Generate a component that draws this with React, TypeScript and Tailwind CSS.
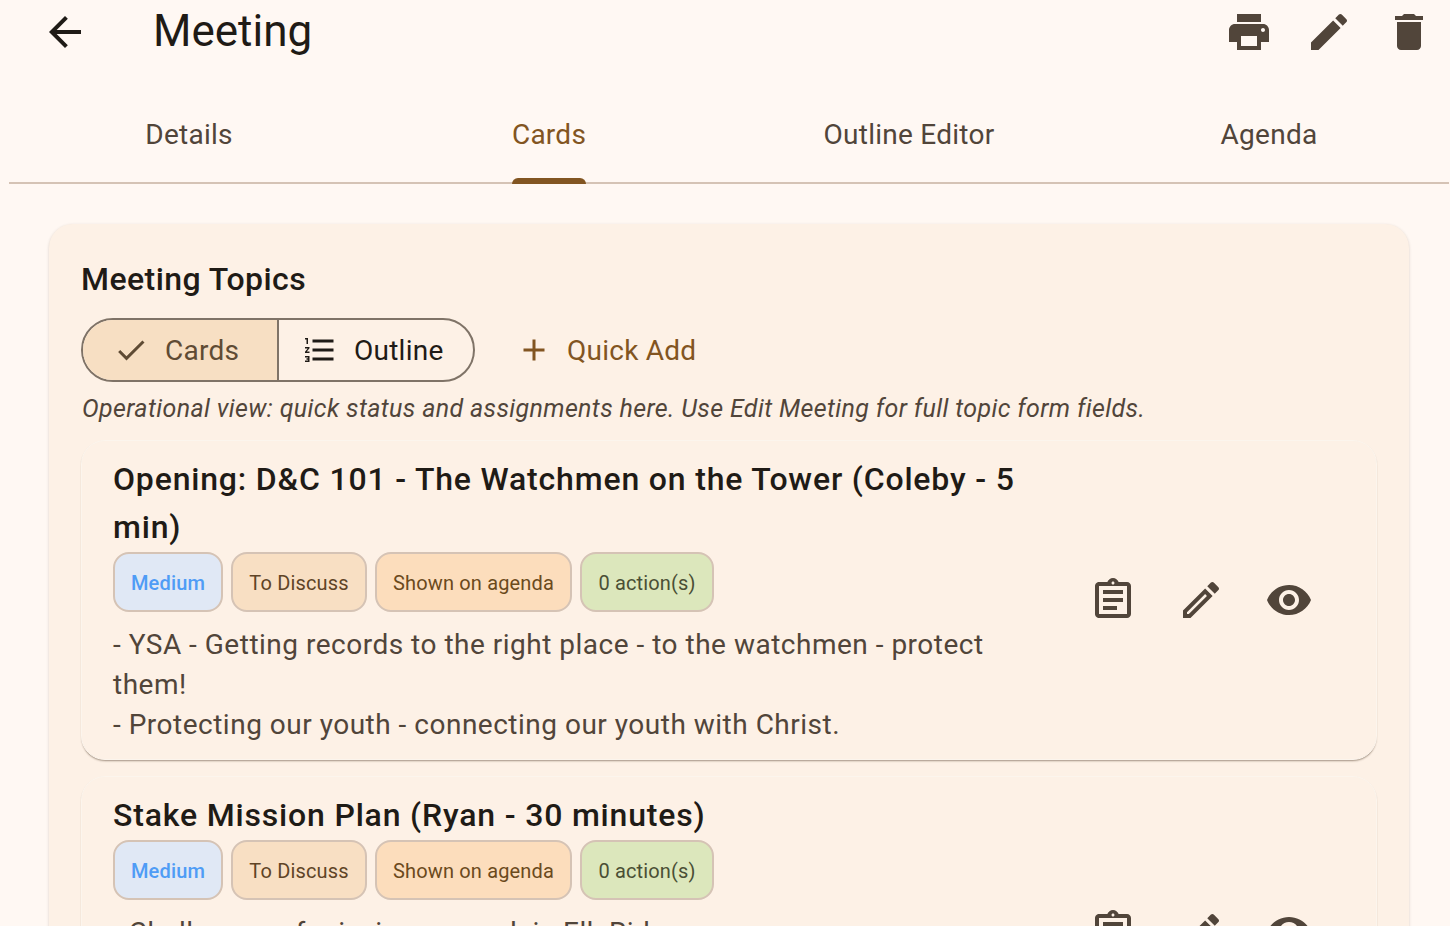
const paths = {
  back: 'M20 11H7.83l5.59-5.59L12 4l-8 8 8 8 1.41-1.41L7.83 13H20v-2z',
  print: 'M19 8H5c-1.66 0-3 1.34-3 3v6h4v4h12v-4h4v-6c0-1.66-1.34-3-3-3zm-3 11H8v-5h8v5zm3-7c-.55 0-1-.45-1-1s.45-1 1-1 1 .45 1 1-.45 1-1 1zm-1-9H6v4h12V3z',
  edit: 'M3 17.25V21h3.75L17.81 9.94l-3.75-3.75L3 17.25zM20.71 7.04c.39-.39.39-1.02 0-1.41l-2.34-2.34c-.39-.39-1.02-.39-1.41 0l-1.83 1.83 3.75 3.75 1.83-1.83z',
  trash: 'M6 19c0 1.1.9 2 2 2h8c1.1 0 2-.9 2-2V7H6v12zM19 4h-3.5l-1-1h-5l-1 1H5v2h14V4z',
  check: 'M9 16.17L4.83 12l-1.42 1.41L9 19 21 7l-1.41-1.41z',
  list: 'M2 17h2v.5H3v1h1v.5H2v1h3v-4H2v1zm1-9h1V4H2v1h1v3zm-1 3h1.8L2 13.1v.9h3v-1H3.2L5 10.9V10H2v1zm5-6v2h14V5H7zm0 14h14v-2H7v2zm0-6h14v-2H7v2z',
  plus: 'M19 13h-6v6h-2v-6H5v-2h6V5h2v6h6v2z',
  assignment: 'M7 15h7v2H7zm0-4h10v2H7zm0-4h10v2H7zm12-4h-4.18C14.4 1.84 13.3 1 12 1c-1.3 0-2.4.84-2.82 2H5c-.14 0-.27.01-.4.04-.39.08-.74.28-1.01.55-.18.18-.33.4-.43.64-.1.23-.16.49-.16.77v14c0 .27.06.54.16.78s.25.45.43.64c.27.27.62.47 1.01.55.13.02.26.03.4.03h14c1.1 0 2-.9 2-2V5c0-1.1-.9-2-2-2zm-7-.25c.41 0 .75.34.75.75s-.34.75-.75.75-.75-.34-.75-.75.34-.75.75-.75zM19 19H5V5h14v14z',
  editOutline: 'M14.06 9.02l.92.92L5.92 19H5v-.92l9.06-9.06M17.66 3c-.25 0-.51.1-.7.29l-1.83 1.83 3.75 3.75 1.83-1.83c.39-.39.39-1.02 0-1.41l-2.34-2.34c-.2-.2-.45-.29-.71-.29zm-3.6 3.19L3 17.25V21h3.75L17.81 9.94l-3.75-3.75z',
  eye: 'M12 4.5C7 4.5 2.73 7.61 1 12c1.73 4.39 6 7.5 11 7.5s9.27-3.11 11-7.5c-1.73-4.39-6-7.5-11-7.5zM12 17c-2.76 0-5-2.24-5-5s2.24-5 5-5 5 2.24 5 5-2.24 5-5 5zm0-8c-1.66 0-3 1.34-3 3s1.34 3 3 3 3-1.34 3-3-1.34-3-3-3z',
};

function Icon({ d, className }: { d: string; className: string }) {
  return (
    <svg viewBox="0 0 24 24" fill="currentColor" className={className}>
      <path d={d} />
    </svg>
  );
}

function Chips() {
  return (
    <div className="mt-px flex gap-2 text-[20px] leading-[30px] tracking-[0.15px]">
      <span className="flex h-[60px] w-[110px] items-center justify-center rounded-2xl border-2 border-[#d5c3b5] bg-[#e0e8f5] pt-0.5 font-medium text-[#4f9cf5]">Medium</span>
      <span className="flex h-[60px] w-[136px] items-center justify-center rounded-2xl border-2 border-[#d5c3b5] bg-[#f8dfc3] pt-0.5 text-[#5f4426]">To Discuss</span>
      <span className="flex h-[60px] w-[197px] items-center justify-center rounded-2xl border-2 border-[#d5c3b5] bg-[#fcddbc] pt-0.5 text-[#6b4a1c]">Shown on agenda</span>
      <span className="flex h-[60px] w-[134px] items-center justify-center rounded-2xl border-2 border-[#d5c3b5] bg-[#dce7bc] pt-0.5 text-[#4a4f35]">0 action(s)</span>
    </div>
  );
}

function Actions() {
  return (
    <div className="flex gap-10 text-[#51453a]">
      <Icon d={paths.assignment} className="h-12 w-12" />
      <Icon d={paths.editOutline} className="h-12 w-12" />
      <Icon d={paths.eye} className="h-12 w-12" />
    </div>
  );
}

function TopicCard({ title, lines, className }: { title: string; lines: string[]; className: string }) {
  return (
    <div className={`flex rounded-[24px] border border-[#fcf5ed] bg-[#fdf1e6] pt-[14px] pr-[63px] pb-[15px] pl-[31px] shadow-[0_2px_2px_-1px_rgba(80,60,40,0.45),0_1px_2px_-1px_rgba(80,60,40,0.3)] ${className}`}>
      <div className="w-[920px]">
        <h3 className="text-[32px] leading-[48px] font-medium tracking-[0.82px] text-[#1f1b16]">{title}</h3>
        <Chips />
        <div className="mt-[13px] text-[28px] leading-[40px] tracking-[0.5px] text-[#51453a]">
          {lines.map((line) => (
            <p key={line}>{line}</p>
          ))}
        </div>
      </div>
      <div className="ml-auto self-center">
        <Actions />
      </div>
    </div>
  );
}

export default function App() {
  const tabs = ['Details', 'Cards', 'Outline Editor', 'Agenda'];

  return (
    <div className="h-[926px] overflow-hidden bg-[#fff8f3] font-['Roboto',sans-serif]">
      <header className="flex h-[64px] items-center pr-[17px] pl-[41px] text-[#51453a]">
        <Icon d={paths.back} className="h-12 w-12 text-[#1f1b16]" />
        <h1 className="mb-0.5 ml-[64px] text-[44px] leading-[60px] text-[#1f1b16]">Meeting</h1>
        <div className="ml-auto flex gap-8">
          <Icon d={paths.print} className="h-12 w-12" />
          <Icon d={paths.edit} className="h-12 w-12" />
          <Icon d={paths.trash} className="h-12 w-12" />
        </div>
      </header>

      <nav className="mt-5 mr-px ml-[9px] flex h-[100px] border-b-2 border-[#d5c3b5] text-[28px] tracking-[0.25px]">
        {tabs.map((tab) => (
          <div key={tab} className="flex flex-1 items-center justify-center">
            <span className={tab === 'Cards' ? 'relative flex h-full items-center pt-[3px] text-[#825521]' : 'pt-[3px] text-[#51453a]'}>
              {tab}
              {tab === 'Cards' && <span className="absolute right-0 bottom-[-2px] left-0 h-[6px] rounded-t-[6px] bg-[#825521]" />}
            </span>
          </div>
        ))}
      </nav>

      <main className="mt-[40px] mr-[41px] ml-[49px] h-[800px] rounded-[24px] bg-[#fdf1e6] px-8 pt-[31px] shadow-[0_1px_3px_rgba(80,60,40,0.22)]">
        <h2 className="text-[32px] leading-[48px] font-medium tracking-[0.43px] text-[#1f1b16]">Meeting Topics</h2>
        <div className="mt-[15px] flex items-center">
          <div className="flex h-16 w-[394px] overflow-hidden rounded-full border-2 border-[#7f7367] text-[28px] tracking-[0.25px]">
            <div className="flex w-[196px] items-center gap-4 border-r-2 border-[#7f7367] bg-[#f7dfc3] pl-[30px] text-[#5f4b34]">
              <Icon d={paths.check} className="h-9 w-9" />
              <span className="pt-0.5">Cards</span>
            </div>
            <div className="flex flex-1 items-center gap-4 pl-[23px] text-[#1f1b16]">
              <Icon d={paths.list} className="h-9 w-9" />
              <span className="pt-0.5">Outline</span>
            </div>
          </div>
          <div className="ml-[41px] flex items-center gap-[15px] text-[28px] tracking-[0.25px] text-[#825521]">
            <Icon d={paths.plus} className="h-9 w-9" />
            <span className="pt-0.5">Quick Add</span>
          </div>
        </div>
        <p className="mt-[9px] pl-px text-[25px] leading-[36px] tracking-[0.36px] text-[#51453a] italic">
          Operational view: quick status and assignments here. Use Edit Meeting for full topic form fields.
        </p>
        <div className="mt-[13px] flex flex-col gap-4">
          <TopicCard
            className="h-[320px]"
            title="Opening: D&C 101 - The Watchmen on the Tower (Coleby - 5 min)"
            lines={['- YSA - Getting records to the right place - to the watchmen - protect them!', '- Protecting our youth - connecting our youth with Christ.']}
          />
          <TopicCard
            className="h-[312px]"
            title="Stake Mission Plan (Ryan - 30 minutes)"
            lines={['- Challenges of missionary work in Elk Ridge']}
          />
        </div>
      </main>
    </div>
  );
}
